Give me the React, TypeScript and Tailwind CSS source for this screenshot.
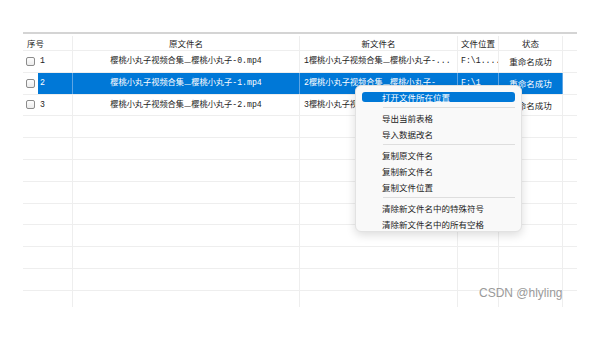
import React from 'react';
import { clsx } from 'clsx';

const rowFont = "font-['Liberation_Mono','Noto_Sans_CJK_SC',monospace] text-[8.2px] leading-[12px]";
const uiFont = "font-['Noto_Sans_CJK_SC','Noto_Sans',sans-serif] text-[8.5px] leading-[11px]";

interface RowData {
  no?: string;
  loc?: string;
  status?: string;
  selected?: boolean;
}

const FileName: React.FC<{ prefix?: string; suffix: string }> = ({ prefix = '', suffix }) => (
  <>
    {prefix}樱桃小丸子视频合集<span className="font-['Noto_Sans_CJK_SC',sans-serif]">—</span>樱桃小丸子{suffix}
  </>
);

const Checkbox = () => (
  <span className="ml-[3px] w-[9px] h-[9px] shrink-0 rounded-[2px] border border-[#8c8c8c] bg-gradient-to-b from-[#fdfdfd] to-[#ececec]" />
);

const Row: React.FC<RowData & { children?: React.ReactNode; neuNode?: React.ReactNode }> = ({
  no,
  loc,
  status,
  selected,
  children,
  neuNode
}) => {
  const line = selected ? 'border-[#5ea5e4]' : 'border-[#eeeeee]';
  const fill = selected ? 'bg-[#0078d7] text-white' : 'text-[#1c1c1c]';
  return (
    <div className={clsx('flex h-[21.8px] shrink-0 border-b border-[#eeeeee]', rowFont)}>
      <div className={clsx('w-[50px] flex items-center border-r', line)}>
        {no && <Checkbox />}
        {no && (
          <div className={clsx('flex-1 h-full ml-[3px] pl-[2px] flex items-center', fill)}>{no}</div>
        )}
      </div>
      <div className={clsx('w-[227px] flex items-center justify-center whitespace-nowrap overflow-hidden border-r', line, fill)}>
        {children}
      </div>
      <div className={clsx('w-[158px] flex items-center pl-[4px] whitespace-nowrap overflow-hidden border-r', line, fill)}>
        {neuNode}
      </div>
      <div className={clsx('w-[41px] flex items-center pl-[3px] whitespace-nowrap overflow-hidden border-r', line, fill)}>
        {loc}
      </div>
      <div className={clsx("w-[64px] flex items-center justify-center border-r font-['Noto_Sans_CJK_SC',sans-serif] text-[8.5px]", line, fill)}>
        {status}
      </div>
      <div className="w-[14px]" />
    </div>
  );
};

const MenuItem: React.FC<{ label: string; active?: boolean }> = ({ label, active }) => (
  <div className="h-[16px] flex items-center px-[6px]">
    <div
      className={clsx(
        'flex-1 h-[10px] flex items-center pl-[20px] rounded-[3px] leading-[10px]',
        active ? 'bg-[#0078d7] text-white' : 'text-[#1b1b1b]'
      )}
    >
      {label}
    </div>
  </div>
);

const Sep = () => (
  <div className="h-[5px] flex items-center pl-[27px] pr-[6px]">
    <div className="flex-1 h-[1px] bg-[#dedede]" />
  </div>
);

export default function App() {
  const empty = Array.from({ length: 9 });
  return (
    <div className="relative w-[600px] h-[340px] bg-white overflow-hidden">
      <div className="ml-[23px] mt-[32px] w-[554px] h-[275px] overflow-hidden flex flex-col border-t-2 border-[#d4d4d4]">
        {/* 表头 */}
        <div className={clsx('flex h-[17px] shrink-0 border-b border-[#eeeeee] text-[#222] pt-[2px]', uiFont)}>
          <div className="w-[50px] pl-[4px] flex items-center border-r border-[#eeeeee]">序号</div>
          <div className="w-[227px] flex items-center justify-center border-r border-[#eeeeee]">原文件名</div>
          <div className="w-[158px] flex items-center justify-center border-r border-[#eeeeee]">新文件名</div>
          <div className="w-[41px] flex items-center justify-center border-r border-[#eeeeee]">文件位置</div>
          <div className="w-[64px] flex items-center justify-center border-r border-[#eeeeee]">状态</div>
          <div className="w-[14px]" />
        </div>

        <Row no="1" loc="F:\1...." status="重命名成功" neuNode={<FileName prefix="1" suffix="-..." />}>
          <FileName suffix="-0.mp4" />
        </Row>
        <Row no="2" loc="F:\1" status="重命名成功" selected neuNode={<FileName prefix="2" suffix="-" />}>
          <FileName suffix="-1.mp4" />
        </Row>
        <Row no="3" loc="F:\1...." status="重命名成功" neuNode={<FileName prefix="3" suffix="-..." />}>
          <FileName suffix="-2.mp4" />
        </Row>
        {empty.map((_, i) => (
          <Row key={i} />
        ))}
      </div>

      {/* 右键菜单 */}
      <div
        className={clsx(
          'absolute left-[355px] top-[85px] w-[167px] h-[147px] pt-[3px] rounded-[6px] border border-[#e2e2e2] bg-[#f9f9f9] shadow-[0_3px_10px_rgba(0,0,0,0.14)]',
          uiFont
        )}
      >
        <MenuItem label="打开文件所在位置" active />
        <Sep />
        <MenuItem label="导出当前表格" />
        <MenuItem label="导入数据改名" />
        <Sep />
        <MenuItem label="复制原文件名" />
        <MenuItem label="复制新文件名" />
        <MenuItem label="复制文件位置" />
        <Sep />
        <MenuItem label="清除新文件名中的特殊符号" />
        <MenuItem label="清除新文件名中的所有空格" />
      </div>

      <div className="absolute left-[479px] top-[285px] text-[12px] leading-[16px] text-[#9a9a9a] font-['Liberation_Sans',Arial,sans-serif]">
        CSDN @hlyling
      </div>
    </div>
  );
}
